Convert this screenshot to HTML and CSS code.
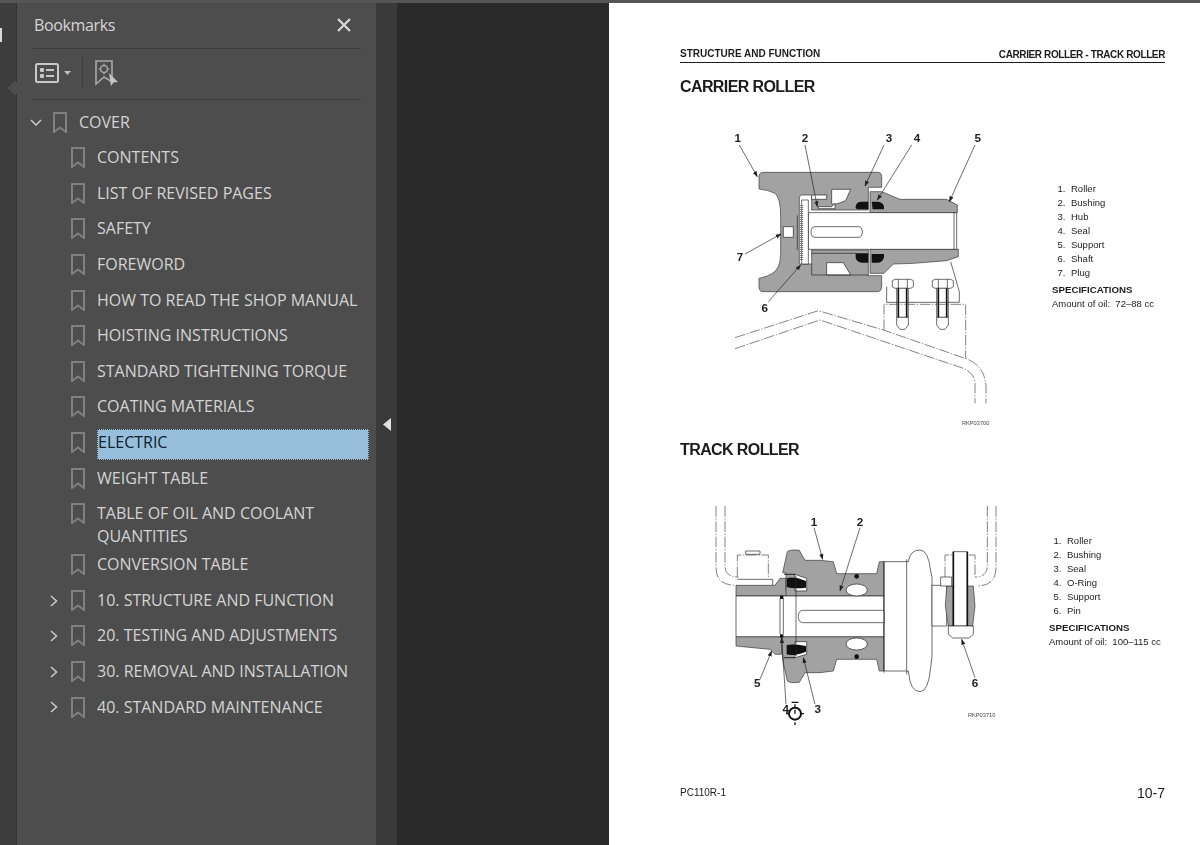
FILE: index.html
```html
<!DOCTYPE html>
<html lang="en">
<head>
<meta charset="utf-8">
<title>Bookmarks</title>
<link rel="stylesheet" href="styles.css">
</head>
<body>
<svg class="defs" width="0" height="0">
  <defs>
    <symbol id="bm" viewBox="0 0 14 21"><path d="M1 1H13V20L7 15.5 1 20Z" fill="none" stroke="#808080" stroke-width="2"/></symbol>
    <marker id="ah" viewBox="0 0 10 10" refX="9" refY="5" markerWidth="9" markerHeight="9" orient="auto"><path d="M0 1.5 10 5 0 8.5Z" fill="#222"/></marker>
  </defs>
</svg>
<div class="app">
  <aside class="rail"><span class="rail-tab"></span><span class="rail-notch"></span></aside>
  <section class="panel">
    <header class="panel-head">
      <span class="panel-title">Bookmarks</span>
      <svg class="close" width="14" height="14" viewBox="0 0 14 14"><path d="M1 1 13 13M13 1 1 13" stroke="#d8d8d8" stroke-width="2.2"/></svg>
    </header>
    <div class="toolbar">
      <svg width="24" height="20" viewBox="0 0 24 20"><rect x="1" y="1" width="22" height="18" rx="1.5" fill="none" stroke="#c8c8c8" stroke-width="2"/><rect x="5" y="5" width="4" height="4" rx="1" fill="#c8c8c8"/><rect x="5" y="11" width="4" height="4" rx="1" fill="#c8c8c8"/><path d="M11 7H19M11 13H19" stroke="#c8c8c8" stroke-width="2"/></svg>
      <svg class="caret" width="7" height="4" viewBox="0 0 7 4"><path d="M0 0H7L3.500 4Z" fill="#c0c0c0"/></svg>
      <span class="tool-sep"></span>
      <svg width="24" height="26" viewBox="0 0 24 26"><path d="M1 1H17V22L14 20 9 17 1 24Z" fill="none" stroke="#a8a8a8" stroke-width="1.600"/><circle cx="9" cy="9" r="3.500" fill="none" stroke="#a8a8a8" stroke-width="1.500"/><path d="M9 3.500V5M9 13V14.500M3.500 9H5M13 9H14.500" stroke="#a8a8a8" stroke-width="1.200"/><path d="M14 13 23 22 18.500 22.500 16 26Z" fill="#c4c4c4"/></svg>
    </div>
    <ul class="tree">
      <li class="row"><span class="twisty"><svg width="12" height="7" viewBox="0 0 12 7"><path d="M1 1 6 6 11 1" fill="none" stroke="#c8c8c8" stroke-width="1.600"/></svg></span><svg class="bm"><use href="#bm"/></svg><span class="label">COVER</span></li>
      <li class="row sub"><span class="twisty"></span><svg class="bm"><use href="#bm"/></svg><span class="label">CONTENTS</span></li>
      <li class="row sub"><span class="twisty"></span><svg class="bm"><use href="#bm"/></svg><span class="label">LIST OF REVISED PAGES</span></li>
      <li class="row sub"><span class="twisty"></span><svg class="bm"><use href="#bm"/></svg><span class="label">SAFETY</span></li>
      <li class="row sub"><span class="twisty"></span><svg class="bm"><use href="#bm"/></svg><span class="label">FOREWORD</span></li>
      <li class="row sub"><span class="twisty"></span><svg class="bm"><use href="#bm"/></svg><span class="label">HOW TO READ THE SHOP MANUAL</span></li>
      <li class="row sub"><span class="twisty"></span><svg class="bm"><use href="#bm"/></svg><span class="label">HOISTING INSTRUCTIONS</span></li>
      <li class="row sub"><span class="twisty"></span><svg class="bm"><use href="#bm"/></svg><span class="label">STANDARD TIGHTENING TORQUE</span></li>
      <li class="row sub"><span class="twisty"></span><svg class="bm"><use href="#bm"/></svg><span class="label">COATING MATERIALS</span></li>
      <li class="row sub"><span class="twisty"></span><svg class="bm"><use href="#bm"/></svg><span class="label selected">ELECTRIC</span></li>
      <li class="row sub"><span class="twisty"></span><svg class="bm"><use href="#bm"/></svg><span class="label">WEIGHT TABLE</span></li>
      <li class="row sub"><span class="twisty"></span><svg class="bm"><use href="#bm"/></svg><span class="label">TABLE OF OIL AND COOLANT QUANTITIES</span></li>
      <li class="row sub"><span class="twisty"></span><svg class="bm"><use href="#bm"/></svg><span class="label">CONVERSION TABLE</span></li>
      <li class="row sub"><span class="twisty"><svg width="8" height="12" viewBox="0 0 8 12"><path d="M1 1 6.500 6 1 11" fill="none" stroke="#c8c8c8" stroke-width="1.600"/></svg></span><svg class="bm"><use href="#bm"/></svg><span class="label">10. STRUCTURE AND FUNCTION</span></li>
      <li class="row sub"><span class="twisty"><svg width="8" height="12" viewBox="0 0 8 12"><path d="M1 1 6.500 6 1 11" fill="none" stroke="#c8c8c8" stroke-width="1.600"/></svg></span><svg class="bm"><use href="#bm"/></svg><span class="label">20. TESTING AND ADJUSTMENTS</span></li>
      <li class="row sub"><span class="twisty"><svg width="8" height="12" viewBox="0 0 8 12"><path d="M1 1 6.500 6 1 11" fill="none" stroke="#c8c8c8" stroke-width="1.600"/></svg></span><svg class="bm"><use href="#bm"/></svg><span class="label">30. REMOVAL AND INSTALLATION</span></li>
      <li class="row sub"><span class="twisty"><svg width="8" height="12" viewBox="0 0 8 12"><path d="M1 1 6.500 6 1 11" fill="none" stroke="#c8c8c8" stroke-width="1.600"/></svg></span><svg class="bm"><use href="#bm"/></svg><span class="label">40. STANDARD MAINTENANCE</span></li>
    </ul>
  </section>
  <div class="splitter"><svg width="8" height="13" viewBox="0 0 8 13"><path d="M8 0V13L0 6.500Z" fill="#e0e0e0"/></svg></div>
  <div class="gutter"></div>
  <main class="page">
    <div class="page-head"><span class="head-l">STRUCTURE AND FUNCTION</span><span class="head-r">CARRIER ROLLER - TRACK ROLLER</span></div>
    <h2 class="fig-title">CARRIER ROLLER</h2>
    <div class="fig-row first">
      <svg class="fig" width="330" height="320" viewBox="0 0 990 960">
        <g class="ln">
          <path class="gr" d="M237 200Q237 187 252 187H592Q605 187 605 200V232H565V300H395V255H365Q358 255 358 265V462H395V420H565V497H605V530Q605 545 590 545H250Q237 545 237 530V505Q285 495 295 470 302 455 302 430V320Q302 265 285 250 265 240 237 237Z"/>
          <path class="gr" d="M570 245H605L660 268H800L832 285V308H570Z"/>
          <path class="gr" d="M570 418H835V440L800 452 700 460 640 462 612 490H570Z"/>
          <path class="wh" d="M385 308H830V418H385Z"/>
          <path class="wh" d="M393 366Q393 350 405 350H535Q547 350 547 366 547 382 535 382H405Q393 382 393 366Z"/>
          <path class="wh" d="M365 270H385V462H365Z"/>
          <path class="wh" d="M310 350H340V382H310Z"/>
          <path class="wh" d="M455 238H512L497 272 470 282H455Z"/>
          <path class="wh" d="M395 255H440V268H395Z"/>
          <path class="wh" d="M415 290H455L465 280V296H415Z"/>
          <path class="wh" d="M440 458H490L512 495H440Z"/>
          <path class="thin" d="M368 285V450M362 285V450" stroke-dasharray="3 3"/>
          <path class="thin" d="M352 316V420"/>
          <path class="thin" d="M822 308V418"/>
          <path class="thin" d="M395 430H530M395 462V495H565"/>
        </g>
        <g class="blk">
          <path d="M527 292Q527 275 545 275H565V298H530Z"/>
          <path d="M575 275H595Q612 278 612 292V298H578Z"/>
          <path d="M527 430H565V458H545Q527 455 527 440Z"/>
          <path d="M575 432H612V440Q610 458 590 458H575Z"/>
        </g>
        <g class="ln">
          <path class="wh" d="M637 512 645 508H692L700 512V530L692 535H645L637 530ZM757 512 765 508H812L820 512V530L812 535H765L757 530Z"/>
          <path class="thin" d="M655 508V535M682 508V535M775 508V535M802 508V535"/>
          <path class="wh" d="M650 535H685V622H650ZM770 535H805V622H770Z"/>
          <path class="wh" d="M650 622H685V645L675 658H660L650 645ZM770 622H805V645L795 658H780L770 645Z"/>
          <path class="thick" d="M655 535V622M680 535V622M775 535V622M800 535V622"/>
          <path class="thin" d="M620 530V577H838V545L812 455"/>
        </g>
        <g class="dash">
          <path d="M165 683 415 602 610 660 855 745Q915 765 918 830V880"/>
          <path d="M165 716 420 630 850 775Q885 790 885 820V880"/>
          <path d="M612 660V583H857V745"/>
        </g>
        <g class="lead">
          <path d="M178 105 232 200"/><path d="M375 105 412 290"/><path d="M612 105 555 228"/><path d="M695 105 592 270"/><path d="M885 105 808 275"/><path d="M195 432 303 372"/><path d="M265 575 362 465"/>
        </g>
        <g class="num">
          <text x="173" y="97">1</text><text x="375" y="97">2</text><text x="627" y="97">3</text><text x="711" y="97">4</text><text x="893" y="97">5</text><text x="180" y="452">7</text><text x="254" y="605">6</text>
        </g>
        <text class="code" x="887" y="946">RKP03700</text>
      </svg>
      <div class="legend l1">
        <ol class="parts">
          <li>Roller</li><li>Bushing</li><li>Hub</li><li>Seal</li><li>Support</li><li>Shaft</li><li>Plug</li>
        </ol>
        <p class="spec-h">SPECIFICATIONS</p>
        <p class="spec">Amount of oil:&nbsp; 72–88 cc</p>
      </div>
    </div>
    <h2 class="fig-title second">TRACK ROLLER</h2>
    <div class="fig-row lower">
      <svg class="fig" width="330" height="240" viewBox="0 0 990 720">
        <g class="dash">
          <path d="M108 45V230Q108 283 168 283"/><path d="M135 45V225Q135 258 175 258"/>
          <path d="M948 45V230Q948 285 890 285"/><path d="M922 45V225Q922 258 885 258"/>
          <path d="M172 258V192H265V262M795 258V192H885V258"/>
        </g>
        <g class="ln">
          <path class="wh" d="M197 190V180H240V190Z"/>
          <path class="thin" d="M172 265H278V283"/>
          <path class="gr" d="M168 283H285L300 262H318V300L385 315H168Z"/>
          <path class="gr" d="M308 245 322 182Q330 175 358 178L375 208H420L460 212 470 248H590L598 212H612V315H318V245Z"/>
          <path class="gr" d="M168 437H305V490H285L270 475 168 465Z"/>
          <path class="gr" d="M305 437H612V540H598L590 505H470L460 540 420 545H375L358 574Q330 577 322 570L308 507Z"/>
          <path class="wh" d="M168 315H612V437H168Z"/>
          <path class="wh" d="M612 212H685Q690 177 720 177 745 177 752 240L756 260V495L752 530Q745 602 720 602 690 602 685 540H612Z"/>
          <path class="wh" d="M756 283H800V405H756Z"/>
          <path class="wh" d="M370 358H612V395H370Q355 395 355 376 355 358 370 358Z"/>
          <ellipse class="wh" cx="530" cy="297" rx="32" ry="18"/>
          <ellipse class="wh" cx="530" cy="459" rx="32" ry="18"/>
          <path class="gr" d="M800 285H880L885 345 878 405H805L796 345Z"/>
          <path class="wh" d="M820 182H862V405H820Z"/>
          <path class="wh" d="M782 258H815V285H782Z"/>
          <path class="wh" d="M805 405H880V430L868 441H818L805 430Z"/>
          <path class="thick" d="M820 182V405M862 182V405"/>
          <path class="thin" d="M612 212V545M680 205V550"/>
          <path class="wh" d="M312 250H345V300H380V262L345 250ZM312 500H345V452H380V490L345 500Z"/>
          <path class="thin" d="M300 322V430M310 322V430"/>
        </g>
        <g class="blk">
          <path d="M320 262Q340 255 378 270V290Q340 295 320 288ZM320 462Q340 458 378 465V482Q340 497 320 490Z"/>
          <rect x="300" y="314" width="10" height="10"/><rect x="300" y="430" width="10" height="10"/>
          <circle cx="530" cy="256" r="7"/><circle cx="530" cy="497" r="7"/>
        </g>
        <g class="ln"><path class="thin" d="M348 255V495"/></g>
        <g class="lead">
          <path d="M402 110 428 205"/><path d="M540 110 480 300"/><path d="M405 640 370 500"/><path d="M318 640 305 440"/><path d="M240 565 275 480"/><path d="M885 560 845 445"/>
        </g>
        <g class="num">
          <text x="402" y="104">1</text><text x="540" y="104">2</text><text x="413" y="667">3</text><text x="317" y="667">4</text><text x="232" y="589">5</text><text x="885" y="587">6</text>
        </g>
        <circle cx="345" cy="668" r="18" fill="#fff" stroke="#111" stroke-width="6"/>
        <path d="M345 668V656M335 634H355M345 640V650M345 694V702M324 668H318M366 668H372" stroke="#111" stroke-width="4" fill="none"/>
        <text class="code" x="905" y="678">RKP03710</text>
      </svg>
      <div class="legend l2">
        <ol class="parts">
          <li>Roller</li><li>Bushing</li><li>Seal</li><li>O-Ring</li><li>Support</li><li>Pin</li>
        </ol>
        <p class="spec-h">SPECIFICATIONS</p>
        <p class="spec">Amount of oil:&nbsp; 100–115 cc</p>
      </div>
    </div>
    <div class="page-foot"><span>PC110R-1</span><span class="folio">10-7</span></div>
  </main>
</div>
</body>
</html>
```
FILE: styles.css
```css
* { box-sizing: border-box; }
html, body { margin: 0; height: 100%; overflow: hidden; }
body { background: #2a2a2a; font-family: "Open Sans", "Liberation Sans", sans-serif; }
.defs { position: absolute; }
.app { display: flex; height: 845px; border-top: 3px solid #555; }

.rail { position: relative; width: 17px; flex: none; background: #3e3e3e; border-right: 1px solid #333; }
.rail-tab { position: absolute; left: 0; top: 25px; width: 2px; height: 14px; background: #d8d8d8; }
.rail-notch { position: absolute; left: 8px; top: 79px; width: 12px; height: 12px; background: #4d4d4d; border-left: 1px solid #333; border-bottom: 1px solid #333; transform: rotate(45deg); }

.panel { width: 360px; flex: none; background: #4d4d4d; padding: 0 7px 0 16px; border-right: 1px solid #3a3a3a; }
.panel-head { display: flex; justify-content: space-between; align-items: center; height: 46px; margin-right: 8px; padding: 0 10px 2px 1px; border-bottom: 1px solid #3c3c3c; }
.panel-title { font-size: 16px; letter-spacing: -.35px; color: #d6d6d6; }
.toolbar { display: flex; align-items: center; height: 51px; margin-right: 8px; padding: 0 0 3px 2px; border-bottom: 1px solid #3c3c3c; }
.caret { margin-left: 5px; }
.tool-sep { width: 1px; height: 31px; margin: 0 12px 0 11px; background: #3c3c3c; }

.tree { list-style: none; margin: 4.6px 0 0 -6px; padding: 0; }
.row { display: flex; align-items: flex-start; min-height: 35.6px; }
.row.sub { padding-left: 18px; }
.twisty { flex: none; display: flex; align-items: center; justify-content: center; width: 18px; height: 35.6px; }
.bm { flex: none; width: 14px; height: 21px; margin: 7px 12px 0 8px; }
.label { flex: 1; padding-top: 6px; font-size: 16px; line-height: 22.5px; letter-spacing: 0; color: #d4d4d4; }
.label.selected { height: 31px; margin-top: 4.2px; padding-top: 1px; background: #97bfdc; border: 1px dotted #3a3a3a; color: #10202c; }

.splitter { display: flex; align-items: center; width: 20px; flex: none; height: 842px; padding: 0 0 0 6px; background: #3a3a3a; }
.gutter { width: 212px; flex: none; background: #2a2a2a; }

.page { flex: 1; display: flex; flex-direction: column; padding: 0 35px 0 71px; background: #fff; color: #1c1c1c; font-family: "Liberation Sans", Arial, sans-serif; filter: blur(.35px); }
.page-head { display: flex; justify-content: space-between; align-items: flex-end; height: 59.5px; padding-bottom: 2px; border-bottom: 1.5px solid #1c1c1c; font-size: 10px; font-weight: 700; }
.head-l { margin-bottom: 1px; }
.head-r { letter-spacing: -.38px; }
.fig-title { margin: 13px 0 0; font-size: 16px; line-height: 22px; font-weight: 700; letter-spacing: -.6px; }
.fig-title.second { margin: 9px 0 0; }
.fig-row { display: flex; align-items: flex-start; }
.fig-row.first { margin-top: 12px; }
.fig-row.lower { margin-top: 30px; }
.fig { flex: none; display: block; }
.legend { font-size: 9.5px; line-height: 14px; }
.l1 { margin: 72px 0 0 42px; }
.l2 { margin: 43px 0 0 39px; }
.parts { margin: 0; padding: 0 0 0 16px; }
.parts li { padding-left: 3px; }
.spec-h { margin: 3px 0 0; font-weight: 700; font-size: 9.7px; }
.spec { margin: 0; white-space: nowrap; }
.l2 .parts { padding-left: 15px; }
.page-foot { display: flex; justify-content: space-between; align-items: center; margin-top: 54px; font-size: 10px; }
.folio { font-size: 14px; }

.gr { fill: #a2a2a2; stroke: #333; stroke-width: 2; }
.wh { fill: #fff; stroke: #222; stroke-width: 2; }
.thin { stroke: #222; stroke-width: 2; fill: none; }
.thick { stroke: #111; stroke-width: 5; fill: none; }
.blk { fill: #111; }
.dash { fill: none; stroke: #444; stroke-width: 2; stroke-dasharray: 32 5 4 5; }
.lead { fill: none; stroke: #222; stroke-width: 2; marker-end: url(#ah); }
.num { font-size: 35px; font-weight: 700; text-anchor: middle; fill: #222; }
.code { font-size: 17px; text-anchor: middle; fill: #444; }
```
